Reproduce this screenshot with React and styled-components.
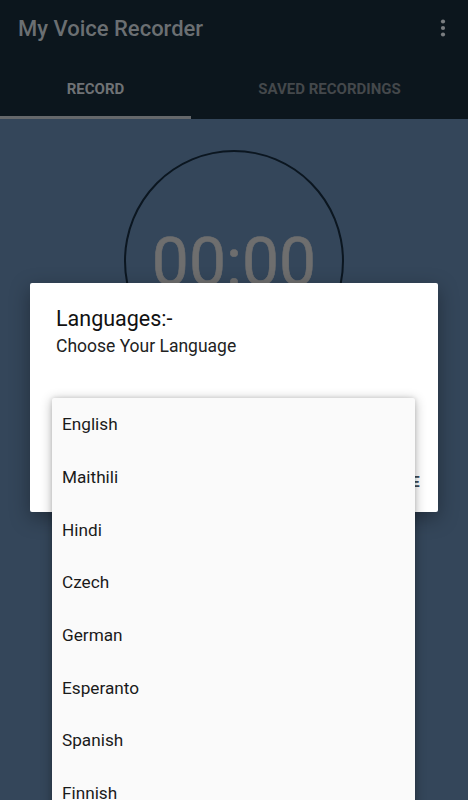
import React from "react";
import styled, { createGlobalStyle } from "styled-components";

const GlobalStyle = createGlobalStyle`
  html, body {
    margin: 0;
    padding: 0;
    background: #34465a;
  }
  body {
    font-family: Roboto, "Noto Sans", "Liberation Sans", sans-serif;
  }
`;

const Screen = styled.div`
  position: relative;
  width: 468px;
  height: 800px;
  overflow: hidden;
  background: #34465a;
  display: flex;
  flex-direction: column;
`;

const AppBar = styled.header`
  background: #0c161d;
  flex-shrink: 0;
`;

const Toolbar = styled.div`
  height: 56px;
  display: flex;
  align-items: center;
  justify-content: space-between;
  padding: 0 22px 0 18px;
`;

const Title = styled.h1`
  margin: 0;
  font-size: 22px;
  font-weight: 500;
  color: #6b6f72;
`;

const Tabs = styled.nav`
  display: flex;
  height: 63px;
`;

const Tab = styled.div`
  flex: ${(p) => (p.$active ? "0 0 191px" : "1")};
  display: flex;
  align-items: center;
  justify-content: center;
  font-size: 15px;
  font-weight: 700;
  color: ${(p) => (p.$active ? "#6f7275" : "#44484b")};
  box-shadow: ${(p) => (p.$active ? "inset 0 -3px 0 #65686b" : "none")};
  padding-top: 2px;
`;

const Body = styled.main`
  flex: 1;
  display: flex;
  justify-content: center;
  padding-top: 31px;
`;

const Timer = styled.div`
  width: 216px;
  height: 216px;
  border: 2px solid #0b1620;
  border-radius: 50%;
  display: flex;
  align-items: center;
  justify-content: center;
  font-size: 66px;
  color: #6e6e6e;
  padding-top: 2px;
  box-sizing: content-box;
  -webkit-text-stroke: 0.6px #6e6e6e;
`;

const Dialog = styled.div`
  position: absolute;
  left: 30px;
  top: 283px;
  width: 408px;
  height: 229px;
  background: #ffffff;
  border-radius: 2px;
  box-shadow: 0 6px 20px rgba(0, 0, 0, 0.35);
  box-sizing: border-box;
  padding: 21px 26px 0;
  display: flex;
  flex-direction: column;
`;

const DialogTitle = styled.h2`
  margin: 0;
  font-size: 21.5px;
  font-weight: 400;
  line-height: 30px;
  color: #111;
`;

const DialogText = styled.p`
  margin: 0;
  font-size: 17.5px;
  line-height: 24px;
  color: #222;
`;

const Actions = styled.div`
  margin-top: auto;
  display: flex;
  justify-content: flex-end;
  padding: 0 0 22px;
  margin-right: -8px;
`;

const Button = styled.span`
  font-size: 14px;
  font-weight: 700;
  color: #3d4a55;
  letter-spacing: 0.3px;
`;

const Menu = styled.ul`
  position: absolute;
  left: 52px;
  top: 398px;
  width: 363px;
  margin: 0;
  padding: 0;
  list-style: none;
  background: #fafafa;
  border-radius: 2px;
  box-shadow: 0 2px 12px rgba(0, 0, 0, 0.3), 0 0 4px rgba(0, 0, 0, 0.12);
`;

const Item = styled.li`
  height: 52.7px;
  display: flex;
  align-items: center;
  padding-left: 10px;
  font-size: 17.2px;
  color: #1a1a1a;
`;

function Dots() {
  return (
    <svg width="6" height="18" viewBox="0 0 6 18">
      <circle cx="3" cy="2.5" r="2.1" fill="#7a7d80" />
      <circle cx="3" cy="9" r="2.1" fill="#7a7d80" />
      <circle cx="3" cy="15.5" r="2.1" fill="#7a7d80" />
    </svg>
  );
}

const languages = [
  "English",
  "Maithili",
  "Hindi",
  "Czech",
  "German",
  "Esperanto",
  "Spanish",
  "Finnish",
  "French",
];

export default function App() {
  return (
    <>
      <GlobalStyle />
      <Screen>
        <AppBar>
          <Toolbar>
            <Title>My Voice Recorder</Title>
            <Dots />
          </Toolbar>
          <Tabs>
            <Tab $active>RECORD</Tab>
            <Tab>SAVED RECORDINGS</Tab>
          </Tabs>
        </AppBar>
        <Body>
          <Timer>00:00</Timer>
        </Body>

        <Dialog>
          <DialogTitle>Languages:-</DialogTitle>
          <DialogText>Choose Your Language</DialogText>
          <Actions>
            <Button>CLOSE</Button>
          </Actions>
        </Dialog>

        <Menu>
          {languages.map((l) => (
            <Item key={l}>{l}</Item>
          ))}
        </Menu>
      </Screen>
    </>
  );
}
